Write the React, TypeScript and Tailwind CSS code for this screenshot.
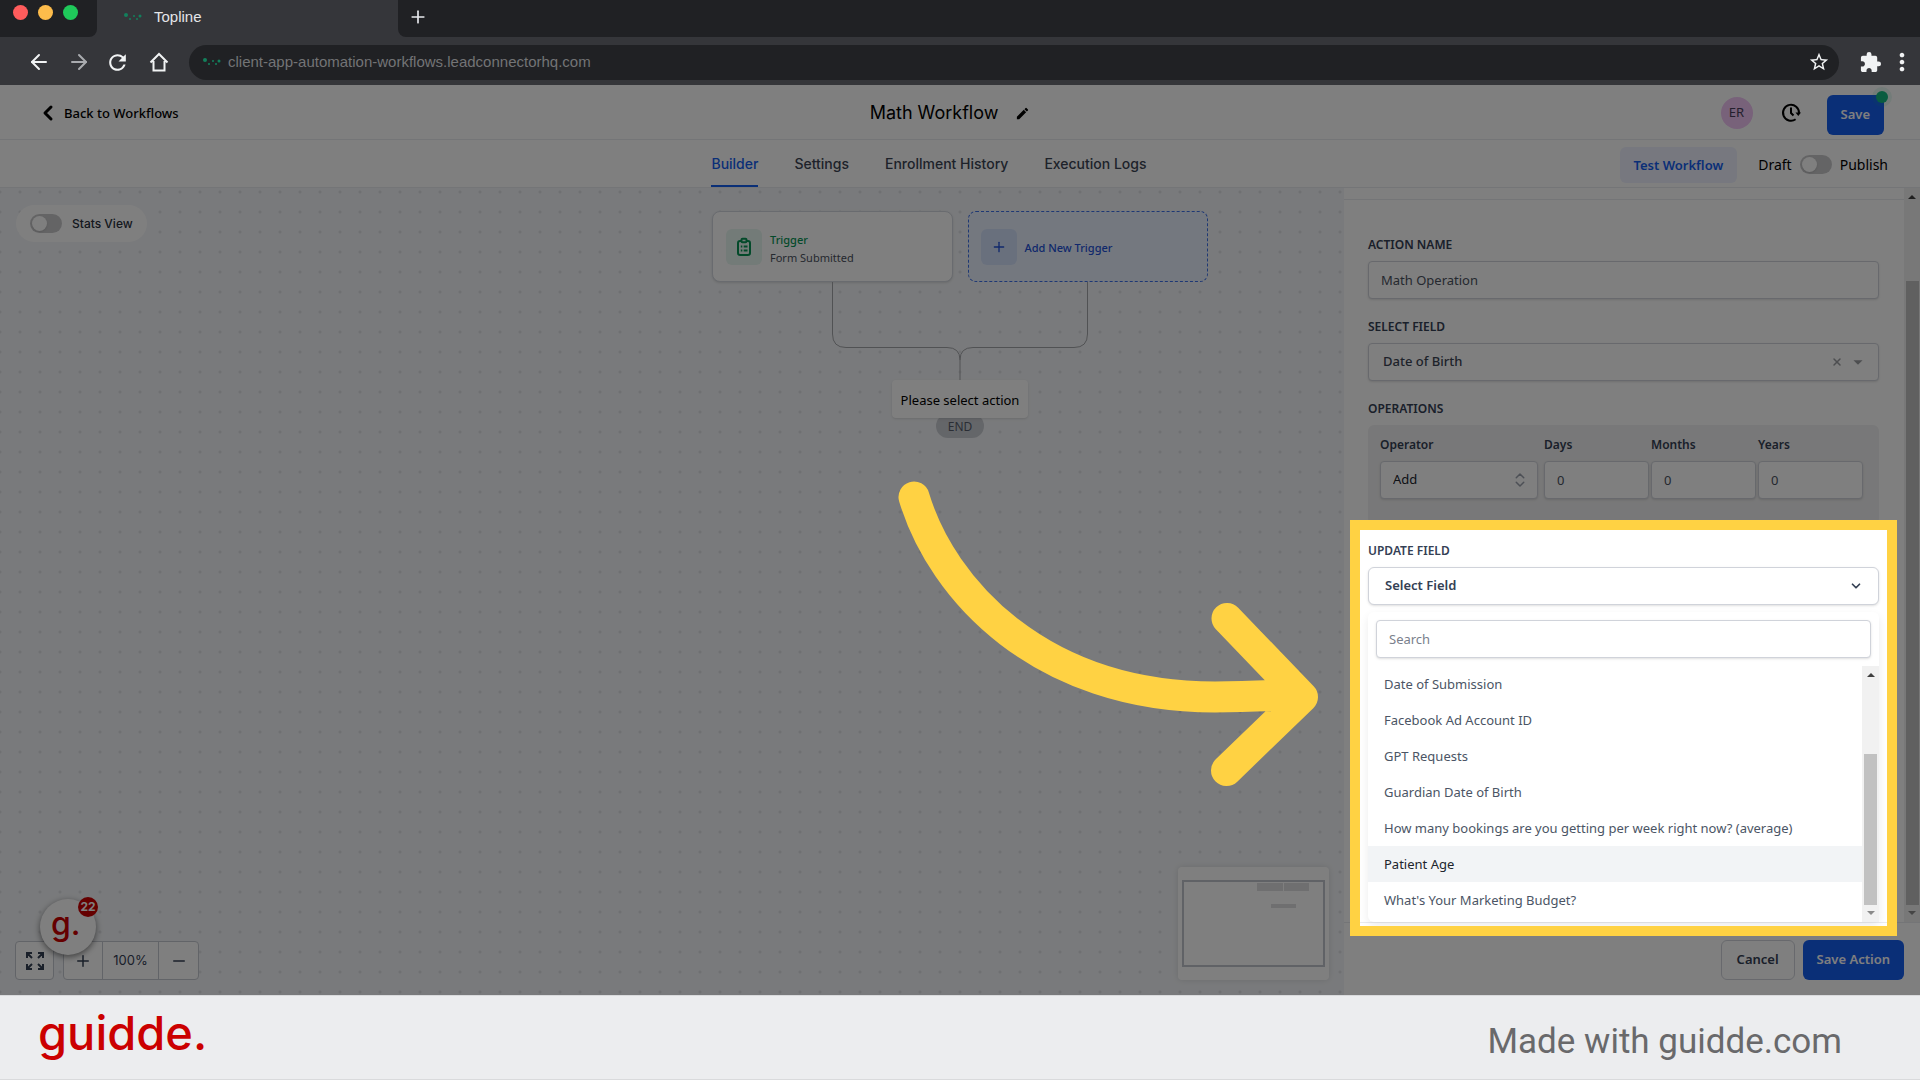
import React from "react";
import { ArrowLeft, ArrowRight, Plus, Minus, ChevronDown, ChevronLeft, ChevronsUpDown, X } from "lucide-react";
import { MdExtension, MdMoreVert, MdStarBorder, MdRefresh, MdEdit, MdArrowDropDown } from "react-icons/md";

function Favicon() {
  return (
    <svg width="18" height="10" viewBox="0 0 18 10" fill="#12805c" aria-hidden="true">
      <circle cx="2" cy="3" r="2" />
      <circle cx="6" cy="7" r="1" />
      <circle cx="10" cy="4" r="1" />
      <circle cx="13" cy="7" r="1" />
      <circle cx="16" cy="4" r="1.5" />
    </svg>
  );
}

function BrowserChrome() {
  return (
    <div className="shrink-0 bg-[#35363a] font-['Liberation_Sans',Arial,sans-serif]">
      <div className="flex h-[37px] bg-[#35363a]">
        <div className="flex w-[97px] gap-[10px] rounded-br-lg bg-[#202124] pl-[13px] pt-[5px]">
          <span className="h-[15px] w-[15px] rounded-full bg-[#ff5c5c]" />
          <span className="h-[15px] w-[15px] rounded-full bg-[#fdbc4b]" />
          <span className="h-[15px] w-[15px] rounded-full bg-[#1fc95a]" />
        </div>
        <div className="flex w-[301px] items-center gap-3 pb-[3px] pl-[27px]">
          <Favicon />
          <span className="text-[15px] leading-5 text-[#e4e5e8]">Topline</span>
        </div>
        <div className="flex flex-1 items-center rounded-bl-lg bg-[#202124] pb-[3px] pl-[10px]">
          <button aria-label="New tab" className="text-[#e8eaed]">
            <Plus size={20} strokeWidth={2} />
          </button>
        </div>
      </div>
      <div className="flex h-12 items-center pl-[27px] pr-1 pt-[2px] text-[#f1f3f4]">
        <button aria-label="Back"><ArrowLeft size={24} strokeWidth={2} /></button>
        <button aria-label="Forward" className="ml-4 text-[#a9abaf]"><ArrowRight size={24} strokeWidth={2} /></button>
        <button aria-label="Reload" className="ml-[14px]"><MdRefresh size={25} /></button>
        <button aria-label="Home" className="ml-[17px]">
          <svg width="24" height="24" viewBox="0 0 24 24" fill="none" stroke="currentColor" strokeWidth="2">
            <path d="M3.500 12.500 12 4l8.500 8.500M6.500 11v9.500h11V11" />
          </svg>
        </button>
        <div className="ml-[18px] flex h-[35px] flex-1 items-center rounded-full bg-[#202124] pl-[14px] pr-[9px]">
          <Favicon />
          <input
            aria-label="Address"
            readOnly
            value="client-app-automation-workflows.leadconnectorhq.com"
            className="ml-[7px] min-w-0 flex-1 bg-transparent text-[15px] leading-5 text-[#737476] outline-none"
          />
          <button aria-label="Bookmark"><MdStarBorder size={22} /></button>
        </div>
        <button aria-label="Extensions" className="ml-5"><MdExtension size={23} /></button>
        <button aria-label="Menu" className="ml-[6px]"><MdMoreVert size={28} /></button>
      </div>
    </div>
  );
}

function Toggle({ label }: { label: string }) {
  return (
    <span className="relative inline-flex h-[19px] w-8 shrink-0">
      <input type="checkbox" aria-label={label} className="peer h-full w-full appearance-none rounded-full bg-[#c9c9cb]" />
      <span className="pointer-events-none absolute left-[2px] top-[2px] h-[15px] w-[15px] rounded-full bg-white shadow" />
    </span>
  );
}

function Header() {
  const tabs = ["Settings", "Enrollment History", "Execution Logs"];
  return (
    <header className="shrink-0 bg-white">
      <div className="grid h-[55px] grid-cols-[1fr_auto_1fr] items-center border-b border-[#e9ebee] pl-9 pr-9 pt-[2px]">
        <a href="#workflows" className="flex items-center text-[13px] font-medium leading-5 text-black">
          <ChevronLeft size={24} strokeWidth={3} />
          <span className="ml-1">Back to Workflows</span>
        </a>
        <div className="flex items-center gap-[17px] pr-5">
          <h1 className="font-[Inter,sans-serif] text-[18px] leading-6 text-black">Math Workflow</h1>
          <button aria-label="Rename"><MdEdit size={15} /></button>
        </div>
        <div className="flex items-center justify-end">
          <span className="flex h-8 w-8 items-center justify-center rounded-full bg-[#f1c4f5] text-[13px] text-[#48405c]">ER</span>
          <button aria-label="Version history" className="ml-7">
            <svg width="20" height="20" viewBox="0 0 20 20" fill="none" stroke="#000" strokeWidth="2">
              <path d="M14.600 16.300A8 8 0 1 1 18 10M10 4.500V10l2.500 2.500" />
              <path d="M14.500 9.500h5.500l-2.700 3.500z" fill="#000" stroke="none" />
            </svg>
          </button>
          <button className="relative ml-[26px] mt-[3px] h-10 rounded-md bg-[#155eef] px-[14px] text-[13px] font-semibold text-white">
            Save
            <span className="absolute -right-1 -top-1 h-3 w-3 rounded-full bg-[#12b981] ring-4 ring-[#12b981]/10" />
          </button>
        </div>
      </div>
      <div className="grid h-12 grid-cols-[1fr_auto_1fr] border-b border-[#e9ebee] pr-8">
        <span />
        <nav className="flex gap-9 pr-[30px] font-[Inter,sans-serif] text-[14px] font-medium leading-5 text-[#3d4554]">
          <a href="#builder" className="flex items-center border-b-2 border-[#155eef] pt-[3px] text-[#155eef]">Builder</a>
          {tabs.map((t) => (
            <a key={t} href={"#" + t.toLowerCase().replace(" ", "-")} className="flex items-center border-b-2 border-transparent pt-[3px]">{t}</a>
          ))}
        </nav>
        <div className="flex items-center justify-end pt-[2px] text-[14px] leading-5 text-black">
          <button className="mr-[21px] h-9 rounded-md bg-[#eef1ff] px-[14px] text-[13px] font-semibold text-[#155eef]">Test Workflow</button>
          <span>Draft</span>
          <span className="mx-2 inline-flex"><Toggle label="Publish workflow" /></span>
          <span>Publish</span>
        </div>
      </div>
    </header>
  );
}

function Flow() {
  return (
    <div className="absolute left-1/2 top-[23px] flex w-[496px] -translate-x-1/2 flex-col items-center">
      <div className="grid w-full grid-cols-2 gap-[15px]">
        <button className="flex h-[71px] items-center gap-2 rounded-lg border border-[#d3d7df] bg-white px-[13px] text-left shadow-sm">
          <span className="flex h-9 w-9 items-center justify-center rounded-md bg-[#e6f7f0]">
            <svg width="18" height="20" viewBox="0 0 18 20" fill="none" stroke="#079455" strokeWidth="2">
              <rect x="3" y="4" width="12" height="14" rx="2" />
              <rect x="6.500" y="1.800" width="5" height="3.500" rx="1" fill="#e6f7f0" />
              <path d="M5.800 9.500h1.500M8.700 9.500h3.800M5.800 13.500h1.500M8.700 13.500h3.800" />
            </svg>
          </span>
          <span className="pt-1 text-[11px] leading-[18px]">
            <span className="block font-medium text-[#079455]">Trigger</span>
            <span className="block text-[#4b5260]">Form Submitted</span>
          </span>
        </button>
        <button className="flex h-[71px] items-center gap-2 rounded-lg border border-dashed border-[#3d70e8] bg-[#e9f1ff] px-3 text-[11px] font-medium text-[#2251d8]">
          <span className="flex h-9 w-9 items-center justify-center rounded-md bg-[#d3e1fb]">
            <Plus size={16} />
          </span>
          <span className="pt-[3px]">Add New Trigger</span>
        </button>
      </div>
      <svg width="256" height="98" viewBox="0 0 256 98" fill="none" stroke="#a3a5a9" strokeWidth="1">
        <path d="M.5 0V52Q.5 65.500 14 65.500H115Q128 65.500 128 78V98M255.500 0V52Q255.500 65.500 242 65.500H141Q128 65.500 128 78" />
      </svg>
      <div className="z-10 rounded bg-white px-[9px] pb-2 pt-[10px] text-[13px] leading-5 text-black shadow-sm">Please select action</div>
      <div className="-mt-1 rounded-full bg-[#c9ccd2] px-3 pb-[2px] pt-1 text-[12px] leading-[18px] text-[#565d6b]">END</div>
    </div>
  );
}

function ZoomControls() {
  return (
    <div className="absolute bottom-[15px] left-[15px] flex items-end gap-[9px] text-[#344054]">
      <button aria-label="Fit to screen" className="flex h-[39px] w-[39px] items-center justify-center rounded border border-[#c4c8d0] bg-white">
        <svg width="18" height="18" viewBox="0 0 18 18" fill="none" stroke="currentColor" strokeWidth="2">
          <path d="M1 6V1h5M1 1l5 5M12 1h5v5M17 1l-5 5M1 12v5h5M1 17l5-5M12 17h5v-5M17 17l-5-5" />
        </svg>
      </button>
      <div className="flex h-[39px] items-stretch rounded border border-[#c4c8d0] bg-white">
        <button aria-label="Zoom in" className="flex w-[38px] items-center justify-center"><Plus size={18} /></button>
        <span className="flex w-[57px] items-center justify-center border-x border-[#c4c8d0] font-[Inter,sans-serif] text-[13px]">100%</span>
        <button aria-label="Zoom out" className="flex w-[39px] items-center justify-center"><Minus size={18} /></button>
      </div>
      <button
        aria-label="guidde, 22 notifications"
        className="absolute bottom-[25px] left-[25px] flex h-14 w-14 justify-start rounded-full bg-white pl-[11px] font-[Inter,sans-serif] text-[32px] font-medium leading-[50px] text-[#cb0000] shadow-[0_2px_6px_rgba(0,0,0,0.5)]"
      >
        g.
        <span className="absolute -right-[2px] -top-[2px] flex h-5 w-5 items-center justify-center rounded-full bg-[#cb0000] text-[12px] font-bold leading-5 text-white">22</span>
      </button>
    </div>
  );
}

function Canvas() {
  return (
    <main className="relative bg-[#f3f5f8] bg-[radial-gradient(circle,#dfe1e5_1px,transparent_2px)] bg-[length:20px_20px] bg-[position:-10px_-6px] [grid-area:1/1]">
      <div className="absolute left-4 top-[17px] flex h-[37px] items-center gap-[10px] rounded-full bg-white pl-[14px] pr-[14px] font-[Inter,sans-serif] text-[12px] font-medium text-[#2a303c]">
        <Toggle label="Stats View" />
        <span>Stats View</span>
      </div>
      <Flow />
      <ZoomControls />
      <div className="absolute bottom-[15px] right-[calc(30%+15px)] h-[113px] w-[151px] rounded bg-white px-1 pt-[13px] shadow-[0_0_6px_rgba(0,0,0,0.12)]">
        <svg width="143" height="87" viewBox="0 0 143 87" role="img" aria-label="Workflow overview">
          <rect x="1" y="1" width="141" height="85" fill="#fff" stroke="#c0c4cd" strokeWidth="2" />
          <path d="M75 3h26v8H75zM102 3h25v8h-25zM89 24h25v4H89z" fill="#dedee0" />
        </svg>
      </div>
    </main>
  );
}

const labelClass = "block text-[12px] font-semibold leading-[18px] text-[#344054]";
const inputClass = "h-[38px] w-full rounded border border-[#d0d3da] bg-white text-[13px] shadow-sm outline-none";

function Arrow() {
  return (
    <svg
      className="pointer-events-none absolute right-full top-[-72px] z-30 mr-[38px]"
      width="440"
      height="330"
      viewBox="890 470 440 330"
      fill="none"
      stroke="#ffd243"
      strokeWidth="31"
      strokeLinecap="round"
      strokeLinejoin="round"
      aria-hidden="true"
    >
      <path d="M914 497C942 590 1040 697 1215 697C1240 697 1265 696 1285 695M1227 618.500L1302.500 697L1226.500 770.500" />
    </svg>
  );
}

const options = [
  "Date of Submission",
  "Facebook Ad Account ID",
  "GPT Requests",
  "Guardian Date of Birth",
  "How many bookings are you getting per week right now? (average)",
  "Patient Age",
  "What's Your Marketing Budget?",
];

function ScrollArrow({ down, dim }: { down?: boolean; dim?: boolean }) {
  return (
    <svg width="8" height="4" viewBox="0 0 8 4" fill={dim ? "#8a8a8a" : "#404040"} aria-hidden="true">
      <path d={down ? "M0 0h8L4 4z" : "M0 4h8L4 0z"} />
    </svg>
  );
}

function UpdateField() {
  return (
    <div className="relative mt-[17px]">
      <span className={labelClass} id="update-label">UPDATE FIELD</span>
      <button
        aria-labelledby="update-label"
        aria-expanded="true"
        className="mt-[7px] flex h-[38px] w-full items-center justify-between rounded-md border border-[#d0d3da] bg-white pl-4 pr-[15px] text-[13px] font-semibold text-[#344054] shadow-sm"
      >
        Select Field
        <ChevronDown size={14} strokeWidth={3} />
      </button>
      <div className="mt-[7px] rounded-md bg-white pt-2 shadow-[0_4px_10px_rgba(0,0,0,0.08)]">
        <div className="px-2">
          <input aria-label="Search fields" placeholder="Search" className={inputClass + " px-3 placeholder:text-[#7a808c]"} />
        </div>
        <div className="mt-2 flex">
          <ul role="listbox" aria-labelledby="update-label" className="flex-1 pb-1 text-[13px] leading-5 text-[#4b5565]">
            {options.map((o) => (
              <li
                key={o}
                role="option"
                aria-selected={o === "Patient Age"}
                className={o === "Patient Age" ? "bg-[#f2f4f6] px-4 py-2 text-[#20242c]" : "px-4 py-2"}
              >
                {o}
              </li>
            ))}
          </ul>
          <div className="flex w-[17px] flex-col items-center bg-[#f1f1f1] py-[7px]">
            <ScrollArrow />
            <div className="mb-[6px] mt-[77px] w-[13px] flex-1 bg-[#c1c1c1]" />
            <ScrollArrow down dim />
          </div>
        </div>
      </div>
      <div className="pointer-events-none absolute -bottom-[14px] -left-[18px] -right-[18px] -top-[22px] z-20 border-[10px] border-[#ffd243] shadow-[0_0_0_3000px_rgba(0,0,0,0.5)]" />
      <Arrow />
    </div>
  );
}

function Panel() {
  return (
    <aside className="relative flex w-[30%] flex-col justify-self-end bg-white [grid-area:1/1]">
      <div className="flex">
        <div className="min-w-0 flex-1">
          <div className="h-3 border-b border-[#e9ebee]" />
          <div className="pl-6 pr-[25px] pt-9">
            <label htmlFor="action-name" className={labelClass}>ACTION NAME</label>
            <input id="action-name" defaultValue="Math Operation" className={inputClass + " mt-[7px] px-3 text-[#4b5260]"} />

            <label htmlFor="select-field" className={labelClass + " mt-[19px]"}>SELECT FIELD</label>
            <div className="relative mt-[7px]">
              <select id="select-field" className={inputClass + " appearance-none px-[14px] pr-16 font-medium text-[#3d4554]"}>
                <option>Date of Birth</option>
              </select>
              <div className="absolute inset-y-0 right-[10px] flex items-center gap-1 text-[#9b9da1]">
                <button aria-label="Clear" className="flex"><X size={12} strokeWidth={3} /></button>
                <MdArrowDropDown size={22} aria-hidden="true" />
              </div>
            </div>

            <span className={labelClass + " mt-[19px]"}>OPERATIONS</span>
            <div className="mt-[7px] flex h-[100px] rounded-md bg-[#f1f1f2] pb-6 pl-3 pr-4 pt-[11px]">
              <div className="w-[158px]">
                <label htmlFor="operator" className={labelClass}>Operator</label>
                <div className="relative mt-[7px]">
                  <select id="operator" className={inputClass + " appearance-none px-3 text-[#20242c]"}>
                    <option>Add</option>
                  </select>
                  <ChevronsUpDown size={18} className="pointer-events-none absolute right-[9px] top-[10px] text-[#9ba1ad]" />
                </div>
              </div>
              <div className="ml-[6px] grid flex-1 grid-cols-3 gap-[2px]">
                {["Days", "Months", "Years"].map((u) => (
                  <div key={u}>
                    <label htmlFor={u} className={labelClass}>{u}</label>
                    <input id={u} defaultValue="0" className={inputClass + " mt-[7px] px-3 text-[#4b5260]"} />
                  </div>
                ))}
              </div>
            </div>

            <UpdateField />
          </div>
        </div>
        <div className="flex w-4 flex-col items-center bg-[#f1f1f1] py-[7px]">
          <ScrollArrow />
          <div className="mb-[6px] mt-[82px] w-[13px] flex-1 bg-[#c1c1c1]" />
          <ScrollArrow down dim />
        </div>
      </div>
      <div className="flex flex-1 items-start justify-end gap-2 border-t border-[#e9ebee] px-4 pt-[17px] text-[13px] font-semibold">
        <button className="h-10 rounded-md border border-[#d0d3da] bg-white px-[15px] text-[#344054]">Cancel</button>
        <button className="h-10 rounded-md bg-[#155eef] px-[14px] text-white">Save Action</button>
      </div>
    </aside>
  );
}

export default function App() {
  return (
    <div className="flex min-h-screen flex-col overflow-hidden font-['Noto_Sans',sans-serif]">
      <BrowserChrome />
      <div className="relative isolate flex flex-1 flex-col overflow-hidden">
        <Header />
        <div className="grid flex-1">
          <Canvas />
          <Panel />
        </div>
      </div>
      <footer className="flex h-[85px] shrink-0 items-center justify-between border-y border-[#d9dadc] bg-[#ecedef] pl-[38px] pr-[78px]">
        <span className="pb-[10px] font-[Inter,sans-serif] text-[47px] font-medium leading-[60px] text-[#cb0000]">guidde.</span>
        <span className="pt-2 font-[Roboto,sans-serif] text-[35px] leading-[44px] text-[#69696b]">Made with guidde.com</span>
      </footer>
    </div>
  );
}
